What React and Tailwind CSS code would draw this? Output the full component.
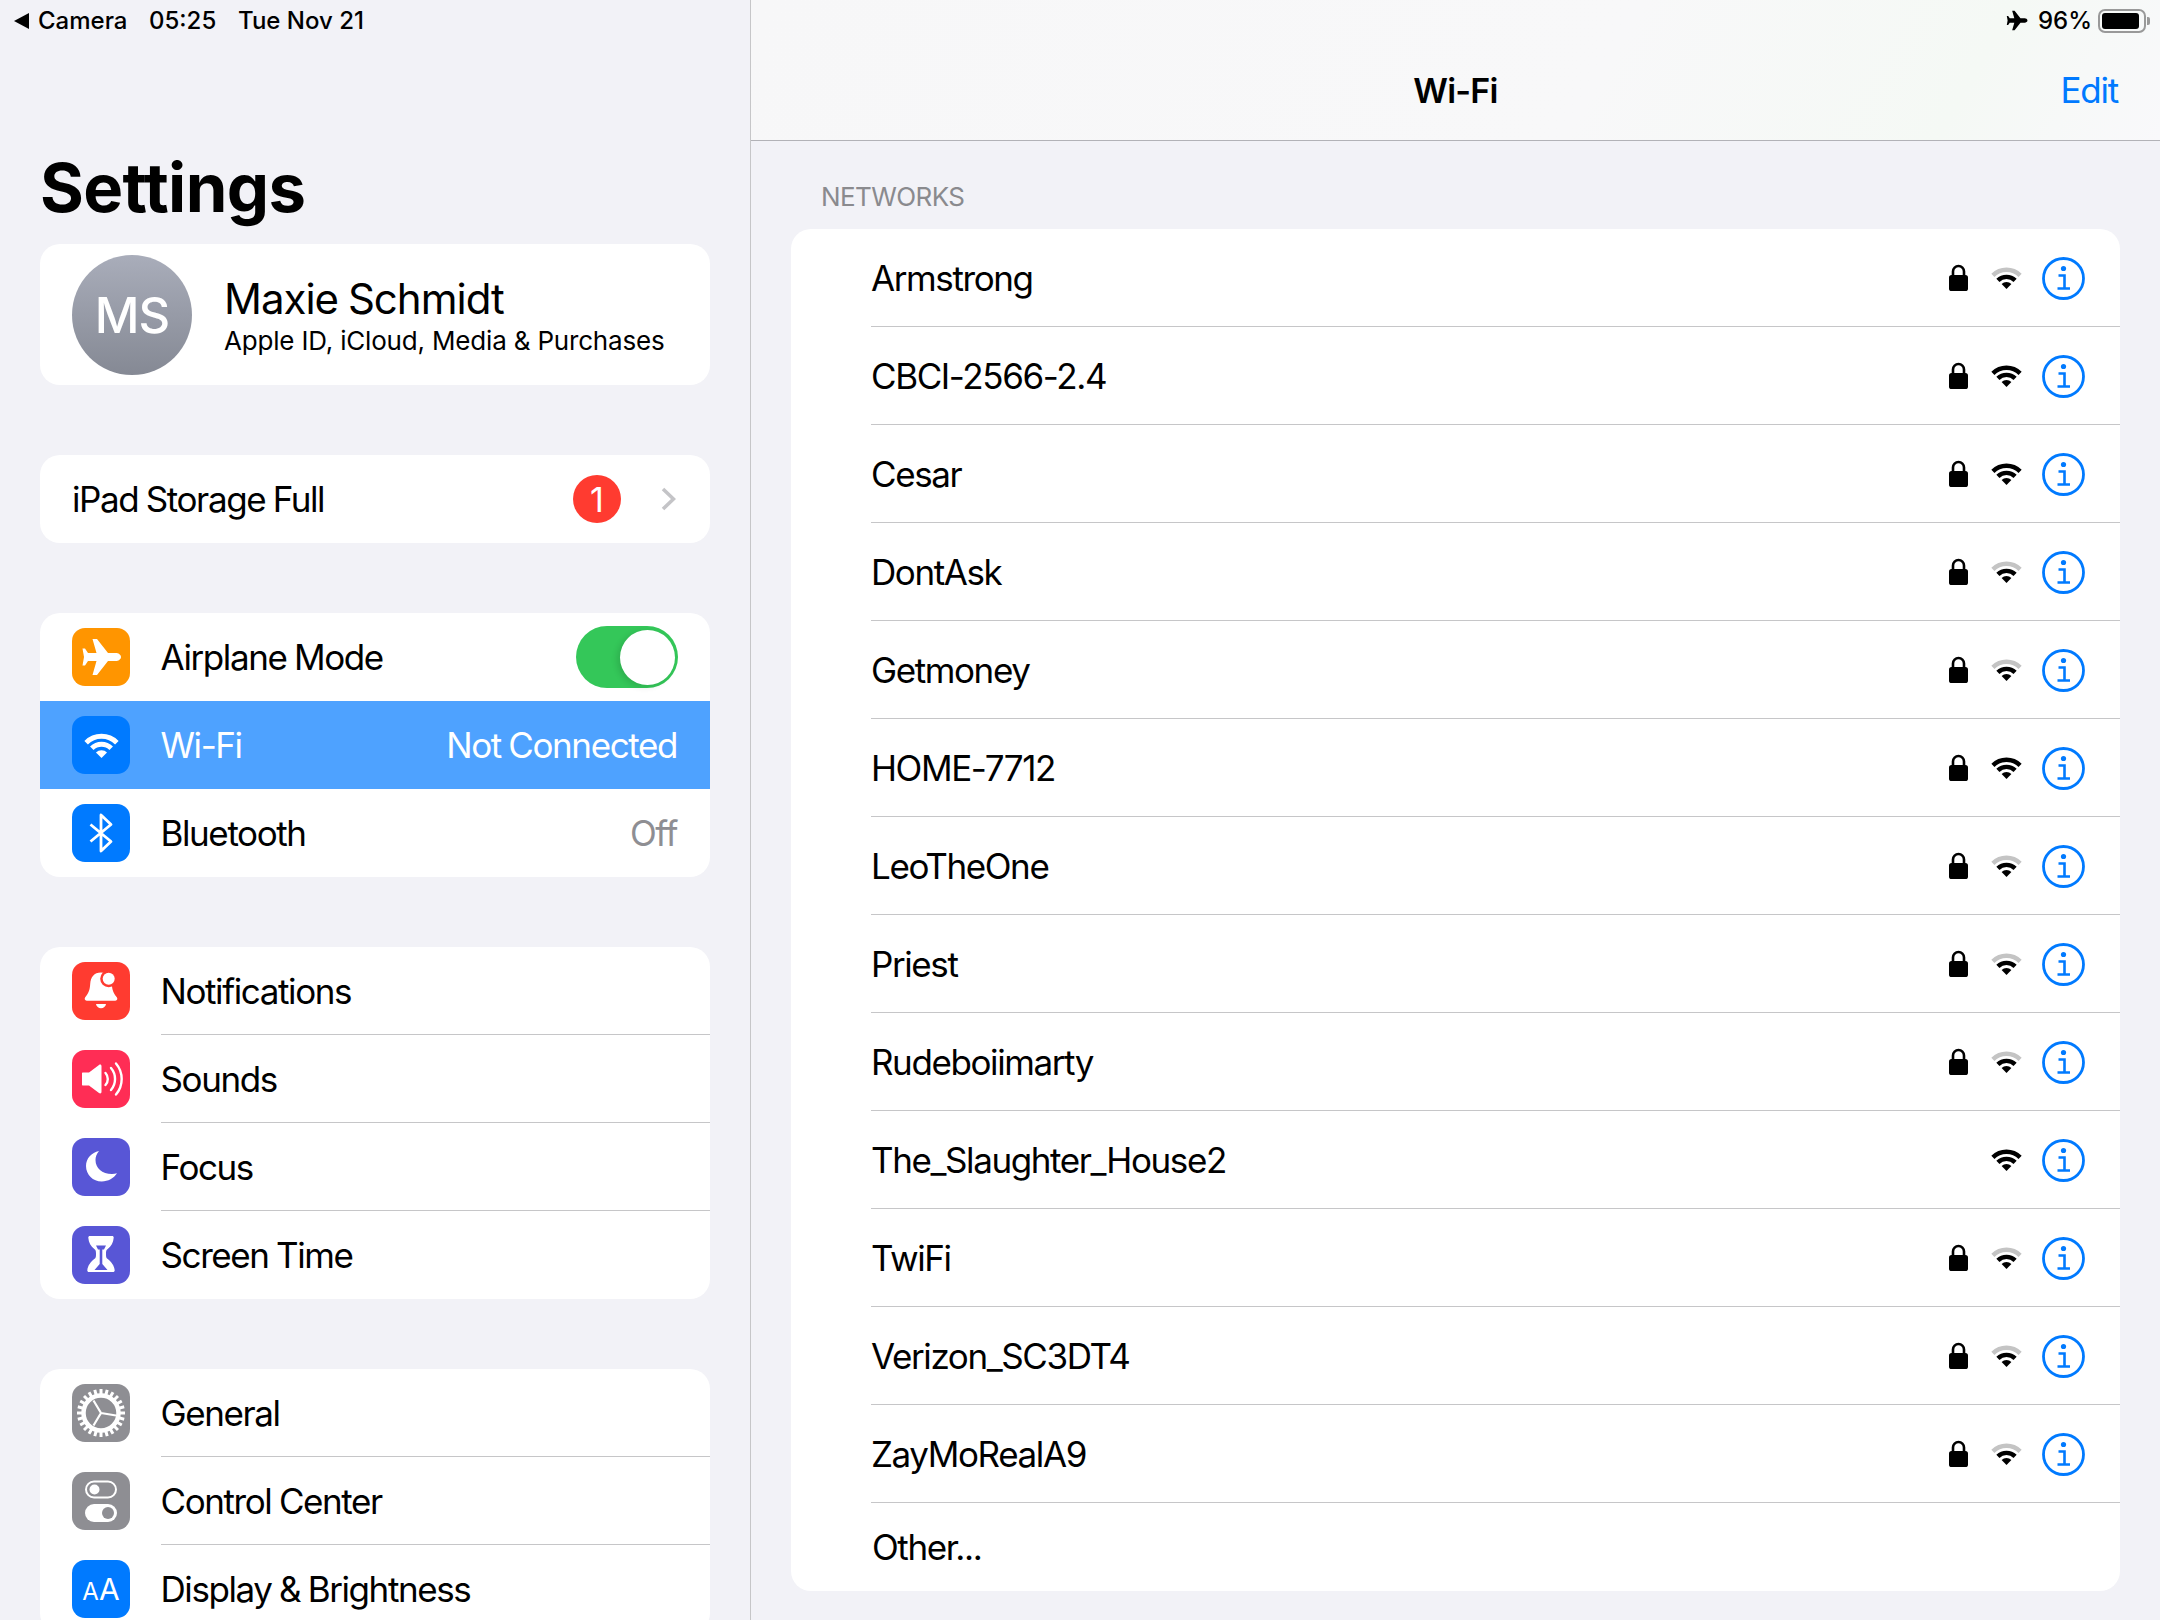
import React from "react";

const PLANE = "M49 28c0-2.500-3-4-5-4H36L25 10h-4.500L24.500 24H16l-3-4.500H10.500L12 28l-1.500 8.500H13L16 32h8.500L20.500 46H25L36 32h8c2 0 5-1.500 5-4z";

function PlaneIcon({ className }) {
  return (
    <svg viewBox="9 9 41 38" className={className} fill="currentColor">
      <path d={PLANE} />
    </svg>
  );
}

function WifiIcon({ weak, className }) {
  return (
    <svg viewBox="0 0 31 23" className={className} fill="none" stroke="currentColor">
      <path d="M1.900 9.400A19.200 19.200 0 0 1 29.100 9.400" strokeWidth="4.400" className={weak ? "stroke-[#c4c4c4]" : ""} />
      <path d="M6.900 14.400A12.200 12.200 0 0 1 24.100 14.400" strokeWidth="4.400" />
      <path d="M15.500 23L10.600 18.100A7 7 0 0 1 20.400 18.100Z" fill="currentColor" stroke="none" />
    </svg>
  );
}

function LockIcon() {
  return (
    <svg viewBox="0 0 19 27" className="w-[19px] h-[27px] mb-[2px] text-black" fill="currentColor">
      <path d="M4 13V7.500a5.500 5.500 0 0 1 11 0V13" fill="none" stroke="currentColor" strokeWidth="2.600" />
      <rect x="0" y="11" width="19" height="16" rx="2.600" />
    </svg>
  );
}

function InfoIcon() {
  return (
    <svg viewBox="0 0 43 43" className="w-[43px] h-[43px] text-[#007aff]" fill="none" stroke="currentColor">
      <circle cx="21.500" cy="21.500" r="20" strokeWidth="2.800" />
      <circle cx="21.500" cy="11.500" r="2.600" fill="currentColor" stroke="none" />
      <path d="M16.500 18.500H22.500V31M15.500 31.500H28" strokeWidth="2.600" />
    </svg>
  );
}

function BellIcon() {
  return (
    <svg viewBox="0 0 58 58" className="w-[58px] h-[58px]" fill="#fff">
      <path d="M29 10.500c-7 0-10.300 4.500-10.800 11.500-.4 6-1.500 9-5 13.300-1 1.200-.5 3.400 1.500 3.400h28.600c2 0 2.500-2.200 1.500-3.400-3.500-4.300-4.600-7.300-5-13.300C39.300 15 36 10.500 29 10.500z" />
      <path d="M24 42h10c-.4 2.700-2.400 4.200-5 4.200s-4.600-1.500-5-4.200z" />
      <circle cx="36.700" cy="16.700" r="8.500" fill="#ff3b30" />
      <circle cx="36.700" cy="16.700" r="6" />
    </svg>
  );
}

function SoundIcon() {
  return (
    <svg viewBox="0 0 58 58" className="w-[58px] h-[58px]" fill="none" stroke="#fff" strokeLinecap="round">
      <path d="M11 22.500h6L27 15c1.300-.9 2.500-.3 2.500 1.300v25.400c0 1.600-1.200 2.200-2.500 1.300l-10-7.500h-6c-.8 0-1-.4-1-1.200v-10.600c0-.8.200-1.200 1-1.200z" fill="#fff" stroke="none" />
      <path d="M33.500 23a9 9 0 0 1 0 12" strokeWidth="2.400" />
      <path d="M39 18a17 17 0 0 1 0 22" strokeWidth="2.400" />
      <path d="M44 13.500a24 24 0 0 1 0 31" strokeWidth="2.400" />
    </svg>
  );
}

function MoonIcon() {
  return (
    <svg viewBox="0 0 58 58" className="w-[58px] h-[58px]" fill="#fff">
      <path d="M27 13C19.500 14.500 14 20.500 14 28c0 8.700 7 15.500 15.700 15.500 6.500 0 12-3.200 15.300-8.200-1.500.5-3.200.7-5 .7-10 0-16.500-6-16.500-14 0-2.800 1-6 3.500-9z" />
    </svg>
  );
}

function HourglassIcon() {
  return (
    <svg viewBox="0 0 58 58" className="w-[58px] h-[58px]" fill="#fff">
      <path d="M18 10h22c1.100 0 1.800.7 1.700 1.700-.4 4.800-2.500 8.500-6 11.300-1.500 1.200-1.700 2-1.700 5s.2 3.800 1.700 5c3.500 2.800 6.600 6.500 7 11.300.1 1-.6 1.700-1.700 1.700H17c-1.100 0-1.800-.7-1.700-1.700.4-4.800 3.500-8.500 7-11.300 1.500-1.200 1.700-2 1.700-5s-.2-3.800-1.700-5c-3.500-2.800-5.600-6.500-6-11.300-.1-1 .6-1.700 1.700-1.700z" />
      <path d="M24 19.500H34L32 23.500H30.300V38L35.500 44H22.500L27.700 38V23.500H26Z" fill="#5856d6" />
    </svg>
  );
}

function GearIcon() {
  const teeth = Array.from({ length: 24 }, (_, i) => i * 15);
  return (
    <svg viewBox="0 0 58 58" className="w-[58px] h-[58px]" fill="none" stroke="#fff">
      <circle cx="29" cy="29" r="17.500" strokeWidth="4.500" />
      {teeth.map((a) => (
        <rect key={a} x="27.500" y="5" width="3" height="7" fill="#fff" stroke="none" transform={`rotate(${a} 29 29)`} />
      ))}
      <path d="M29 29L21.500 16.500M29 29L44 31.500M29 29L21.500 41.500" strokeWidth="2.200" />
    </svg>
  );
}

function TogglesIcon() {
  return (
    <svg viewBox="0 0 58 58" className="w-[58px] h-[58px]">
      <rect x="14" y="9.500" width="30" height="16" rx="8" fill="none" stroke="#fff" strokeWidth="2" />
      <circle cx="22.500" cy="17.500" r="5" fill="#fff" />
      <rect x="13" y="32" width="32" height="18" rx="9" fill="#fff" />
      <circle cx="36" cy="41" r="6" fill="#8e8e93" />
    </svg>
  );
}

function BluetoothIcon() {
  return (
    <svg viewBox="0 0 58 58" className="w-[58px] h-[58px]" fill="none" stroke="#fff" strokeWidth="2.800">
      <path d="M18.500 20.500L39 37.500 29 47V11L39 20.500 18.500 37.500" strokeLinejoin="round" />
    </svg>
  );
}

function Tile({ color, children }) {
  return (
    <div className={`w-[58px] h-[58px] shrink-0 rounded-[13px] flex items-center justify-center overflow-hidden ${color}`}>
      {children}
    </div>
  );
}

const LABEL = "text-[35px] tracking-[-1.400px] [word-spacing:-1px]";

function Row({ color, icon, label, right, divider, active }) {
  return (
    <div className={`h-[88px] flex items-center pl-[32px] ${active ? "bg-[#4ea2ff]" : ""}`}>
      <Tile color={color}>{icon}</Tile>
      <div className={`ml-[30.500px] flex-1 h-full flex items-center justify-between pr-[33px] ${divider ? "border-b border-[#c6c6c8] pt-[1px]" : ""}`}>
        <span className={`${LABEL} ${active ? "text-white" : "text-black"}`}>{label}</span>
        {right}
      </div>
    </div>
  );
}

function Card({ children }) {
  return <div className="bg-white rounded-[20px] overflow-hidden">{children}</div>;
}

function Sidebar() {
  return (
    <aside className="w-[751px] h-full shrink-0 border-r border-[#c6c6c8] overflow-hidden">
      <div className="h-[40px] pt-[2px] pl-[14px] flex items-center text-[24px] font-medium text-black leading-[32px]">
        <svg viewBox="0 0 15 16" className="w-[15px] h-[16px] mr-[9px]" fill="currentColor">
          <path d="M15 0V16L0 8Z" />
        </svg>
        <span className="w-[111px]">Camera</span>
        <span className="w-[89px]">05:25</span>
        <span>Tue Nov 21</span>
      </div>
      <div className="h-[204px] pt-[113px] pl-[40px]">
        <h1 className="text-[67px] leading-[70px] font-bold tracking-[-0.600px] text-black">Settings</h1>
      </div>
      <div className="px-[40px] flex flex-col gap-[70px]">
        <div className="h-[141px] bg-white rounded-[20px] flex items-center pl-[32px]">
          <div className="w-[120px] h-[120px] rounded-full bg-gradient-to-b from-[#a9adba] to-[#858994] flex items-center justify-center pt-[3px] text-white text-[49px] font-medium tracking-[-1px]">
            MS
          </div>
          <div className="ml-[32px] flex flex-col pt-[3px]">
            <span className="text-[42px] leading-[50px] text-black tracking-[-1px] [word-spacing:-1px]">Maxie Schmidt</span>
            <span className="text-[26px] leading-[34px] text-black tracking-[-0.180px]">Apple ID, iCloud, Media &amp; Purchases</span>
          </div>
        </div>

        <div className="h-[88px] bg-white rounded-[20px] flex items-center pl-[32px] pr-[34px]">
          <span className={`flex-1 ${LABEL} text-black`}>iPad Storage Full</span>
          <div className="w-[48px] h-[48px] rounded-full bg-[#ff3b30] flex items-center justify-center text-white text-[34px]">1</div>
          <svg viewBox="0 0 15 24" className="w-[15px] h-[24px] ml-[40px]" fill="none" stroke="#c4c4c7" strokeWidth="3.600">
            <path d="M2 2L12.500 12 2 22" />
          </svg>
        </div>

        <Card>
          <Row
            color="bg-[#ff9500]"
            icon={<PlaneIcon className="w-[41px] h-[38px] text-white" />}
            label="Airplane Mode"
            right={
              <div className="w-[102px] h-[62px] -mr-[1px] rounded-full bg-[#34c759] flex items-center justify-end pr-[3px]">
                <div className="w-[55px] h-[55px] rounded-full bg-white shadow-[-3px_2px_6px_rgba(0,0,0,0.12)]" />
              </div>
            }
          />
          <Row
            active
            color="bg-[#007aff]"
            icon={<WifiIcon className="w-[35px] h-[26px] text-white" />}
            label="Wi-Fi"
            right={<span className={`${LABEL} text-white`}>Not Connected</span>}
          />
          <Row
            color="bg-[#007aff]"
            icon={<BluetoothIcon />}
            label="Bluetooth"
            right={<span className={`${LABEL} text-[#8e8e93]`}>Off</span>}
          />
        </Card>

        <Card>
          <Row divider color="bg-[#ff3b30]" icon={<BellIcon />} label="Notifications" />
          <Row divider color="bg-[#ff2d55]" icon={<SoundIcon />} label="Sounds" />
          <Row divider color="bg-[#5856d6]" icon={<MoonIcon />} label="Focus" />
          <Row color="bg-[#5856d6]" icon={<HourglassIcon />} label="Screen Time" />
        </Card>

        <Card>
          <Row divider color="bg-[#8e8e93]" icon={<GearIcon />} label="General" />
          <Row divider color="bg-[#8e8e93]" icon={<TogglesIcon />} label="Control Center" />
          <Row
            color="bg-[#007aff]"
            icon={<span className="text-white text-[30px] leading-none"><span className="text-[24px]">A</span>A</span>}
            label="Display & Brightness"
          />
        </Card>
      </div>
    </aside>
  );
}

const NETWORKS = [
  { name: "Armstrong", weak: true, lock: true },
  { name: "CBCI-2566-2.4", lock: true },
  { name: "Cesar", lock: true },
  { name: "DontAsk", weak: true, lock: true },
  { name: "Getmoney", weak: true, lock: true },
  { name: "HOME-7712", lock: true },
  { name: "LeoTheOne", weak: true, lock: true },
  { name: "Priest", weak: true, lock: true },
  { name: "Rudeboiimarty", weak: true, lock: true },
  { name: "The_Slaughter_House2", lock: false },
  { name: "TwiFi", weak: true, lock: true },
  { name: "Verizon_SC3DT4", weak: true, lock: true },
  { name: "ZayMoRealA9", weak: true, lock: true },
];

function NetworkRow({ name, weak, lock }) {
  return (
    <div className="h-[98px] ml-[80px] flex items-center pt-[1px] pr-[35px] border-b border-[#c6c6c8]">
      <span className={`flex-1 ${LABEL} text-black`}>{name}</span>
      {lock && <LockIcon />}
      <WifiIcon weak={weak} className="w-[31px] h-[23px] ml-[23px] mr-[20px] mb-[2px] text-black" />
      <InfoIcon />
    </div>
  );
}

function Main() {
  return (
    <main className="flex-1 h-full overflow-hidden">
      <header className="h-[141px] border-b border-[#b2b2b7] bg-[linear-gradient(120deg,#f7f7f8_0%,#f8f8f9_60%,#f5f9f5_85%,#f9f9fb_100%)]">
        <div className="h-[40px] pt-[1px] pr-[10px] flex items-center justify-end text-[24px] text-black">
          <PlaneIcon className="w-[22px] h-[21px] mr-[10px]" />
          <span className="font-medium mr-[6px]">96%</span>
          <div className="w-[48px] h-[24px] rounded-[7px] border-2 border-[#999999] p-[2px]">
            <div className="h-full w-[93%] rounded-[3px] bg-black" />
          </div>
          <div className="w-[3px] h-[8px] rounded-r-[2px] bg-[#999999] ml-[1px]" />
        </div>
        <div className="h-[100px] grid grid-cols-3 items-center">
          <div />
          <div className="text-center text-[34px] font-semibold text-black tracking-[-0.800px]">Wi-Fi</div>
          <div className="text-right pr-[42px] text-[35px] text-[#007aff] tracking-[-1.250px]">Edit</div>
        </div>
      </header>
      <div className="h-[88px] pt-[40px] pl-[70px] text-[26px] leading-[32px] text-[#8a8a8e] tracking-[-0.600px]">NETWORKS</div>
      <div className="mx-[40px] bg-white rounded-[20px] overflow-hidden">
        {NETWORKS.map((n) => (
          <NetworkRow key={n.name} {...n} />
        ))}
        <div className={`h-[88px] pl-[81px] flex items-center ${LABEL} text-black`}>Other...</div>
      </div>
    </main>
  );
}

export default function App() {
  return (
    <div className="w-[2160px] h-[1620px] flex overflow-hidden bg-[#f2f2f7] [font-family:Inter,sans-serif]">
      <Sidebar />
      <Main />
    </div>
  );
}
